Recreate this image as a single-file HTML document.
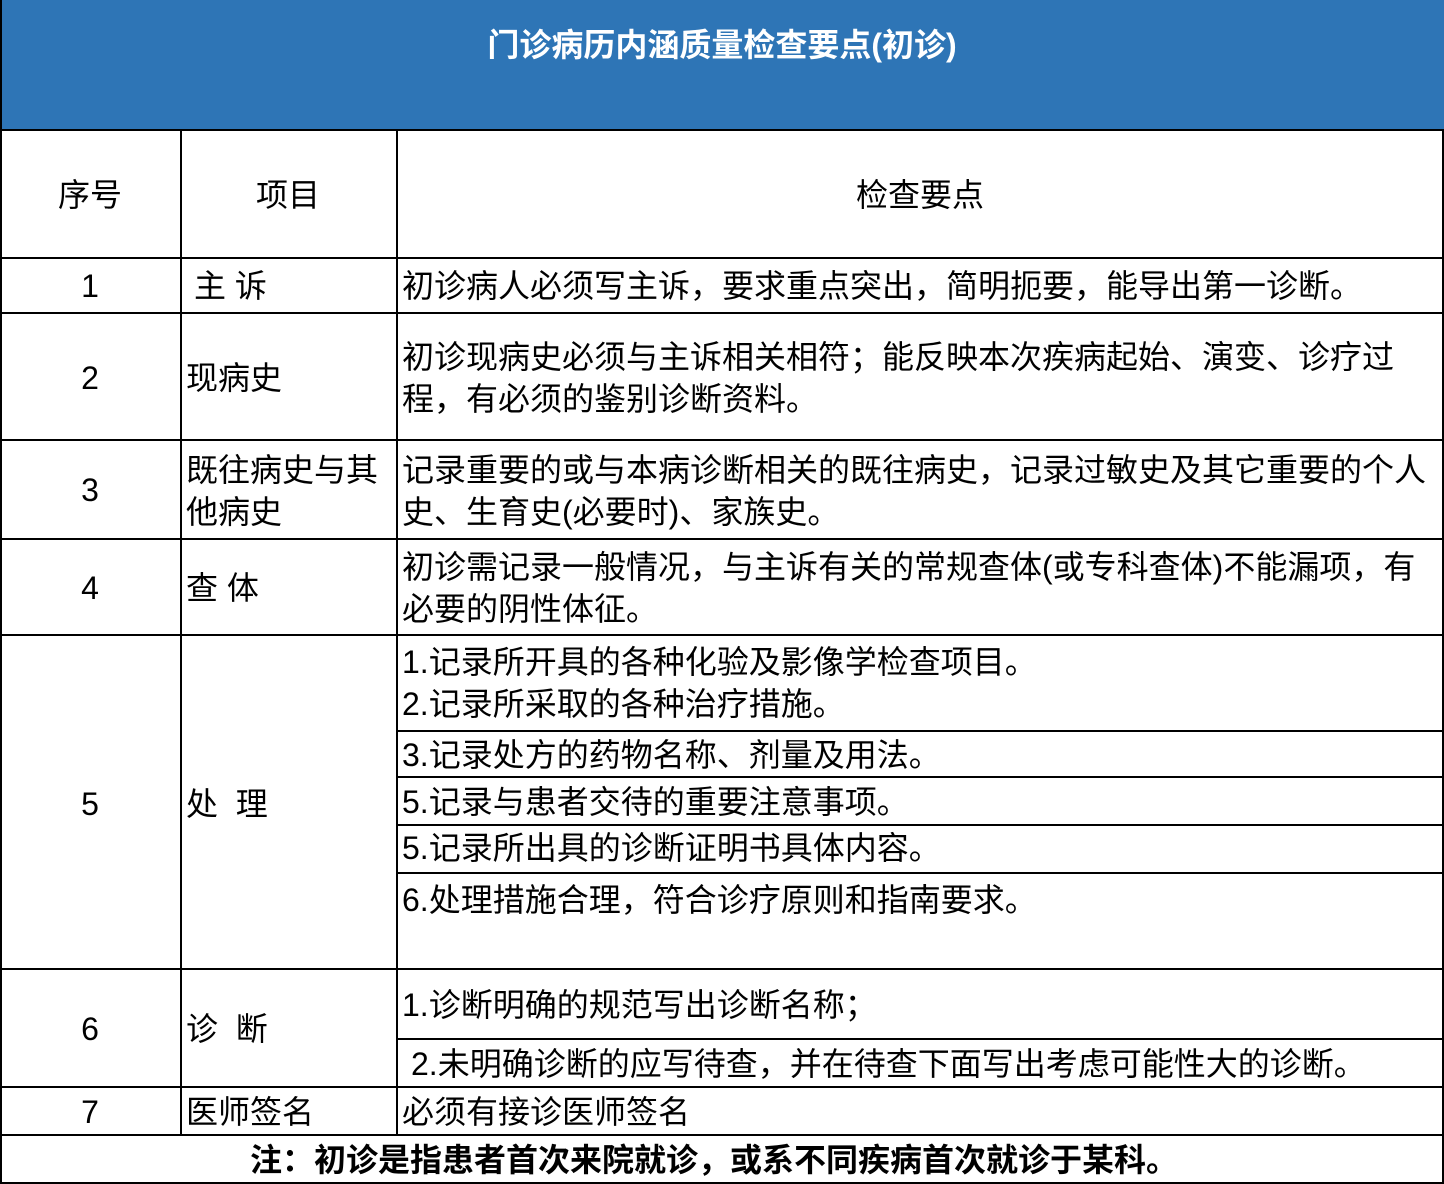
<!DOCTYPE html>
<html><head><meta charset="utf-8"><style>
*{margin:0;padding:0;box-sizing:border-box}
body{width:1444px;height:1184px;background:#fff;position:relative;overflow:hidden;font-family:"Liberation Sans","Noto Sans CJK SC",sans-serif;color:#000}
.h{position:absolute;background:#000;height:2px}
.v{position:absolute;background:#000;width:2px}
.t{position:absolute;font-size:32px;line-height:42px;white-space:nowrap}
.c{text-align:center}
</style></head><body>
<div style="position:absolute;left:0;top:0;width:1444px;height:130px;background:#2E75B6"></div>
<div class="t c" style="left:0;width:1444px;top:24px;color:#fff;font-weight:bold;font-size:32px">门诊病历内涵质量检查要点(初诊)</div>
<div class="v" style="left:0;top:0;height:1184px"></div>
<div class="v" style="left:1442px;top:130px;height:1054px"></div>
<div class="h" style="left:0;top:1182px;width:1444px"></div>
<div class="h" style="left:0;top:129px;width:1444px"></div>
<div class="h" style="left:0;top:257px;width:1444px"></div>
<div class="h" style="left:0;top:312px;width:1444px"></div>
<div class="h" style="left:0;top:439px;width:1444px"></div>
<div class="h" style="left:0;top:538px;width:1444px"></div>
<div class="h" style="left:0;top:634px;width:1444px"></div>
<div class="h" style="left:396px;top:730px;width:1048px"></div>
<div class="h" style="left:396px;top:776px;width:1048px"></div>
<div class="h" style="left:396px;top:824px;width:1048px"></div>
<div class="h" style="left:396px;top:872px;width:1048px"></div>
<div class="h" style="left:0;top:968px;width:1444px"></div>
<div class="h" style="left:396px;top:1038px;width:1048px"></div>
<div class="h" style="left:0;top:1086px;width:1444px"></div>
<div class="h" style="left:0;top:1134px;width:1444px"></div>
<div class="v" style="left:180px;top:130px;height:1005px"></div>
<div class="v" style="left:396px;top:130px;height:1005px"></div>
<div class="t c" style="left:0;width:180px;top:174px">序号</div>
<div class="t c" style="left:180px;width:216px;top:174px">项目</div>
<div class="t c" style="left:396px;width:1048px;top:174px">检查要点</div>
<div class="t c" style="left:0;width:180px;top:265px">1</div>
<div class="t c" style="left:0;width:180px;top:357px">2</div>
<div class="t c" style="left:0;width:180px;top:469px">3</div>
<div class="t c" style="left:0;width:180px;top:567px">4</div>
<div class="t c" style="left:0;width:180px;top:783px">5</div>
<div class="t c" style="left:0;width:180px;top:1008px">6</div>
<div class="t c" style="left:0;width:180px;top:1091px">7</div>
<div class="t" style="left:194px;top:265px">主 诉</div>
<div class="t" style="left:186px;top:357px">现病史</div>
<div class="t" style="left:186px;top:449px">既往病史与其<br>他病史</div>
<div class="t" style="left:186px;top:567px">查 体</div>
<div class="t" style="left:186px;top:783px">处&nbsp; 理</div>
<div class="t" style="left:186px;top:1008px">诊&nbsp; 断</div>
<div class="t" style="left:186px;top:1091px">医师签名</div>
<div class="t" style="left:402px;top:265px">初诊病人必须写主诉，要求重点突出，简明扼要，能导出第一诊断。</div>
<div class="t" style="left:402px;top:336px">初诊现病史必须与主诉相关相符；能反映本次疾病起始、演变、诊疗过<br>程，有必须的鉴别诊断资料。</div>
<div class="t" style="left:402px;top:449px">记录重要的或与本病诊断相关的既往病史，记录过敏史及其它重要的个人<br>史、生育史(必要时)、家族史。</div>
<div class="t" style="left:402px;top:546px">初诊需记录一般情况，与主诉有关的常规查体(或专科查体)不能漏项，有<br>必要的阴性体征。</div>
<div class="t" style="left:402px;top:641px">1.记录所开具的各种化验及影像学检查项目。<br>2.记录所采取的各种治疗措施。</div>
<div class="t" style="left:402px;top:734px">3.记录处方的药物名称、剂量及用法。</div>
<div class="t" style="left:402px;top:781px">5.记录与患者交待的重要注意事项。</div>
<div class="t" style="left:402px;top:827px">5.记录所出具的诊断证明书具体内容。</div>
<div class="t" style="left:402px;top:879px">6.处理措施合理，符合诊疗原则和指南要求。</div>
<div class="t" style="left:402px;top:984px">1.诊断明确的规范写出诊断名称；</div>
<div class="t" style="left:411px;top:1043px">2.未明确诊断的应写待查，并在待查下面写出考虑可能性大的诊断。</div>
<div class="t" style="left:402px;top:1091px">必须有接诊医师签名</div>
<div class="t c" style="left:0;width:1428px;top:1139px;font-weight:bold;font-size:32px">注：初诊是指患者首次来院就诊，或系不同疾病首次就诊于某科。</div>
</body></html>
